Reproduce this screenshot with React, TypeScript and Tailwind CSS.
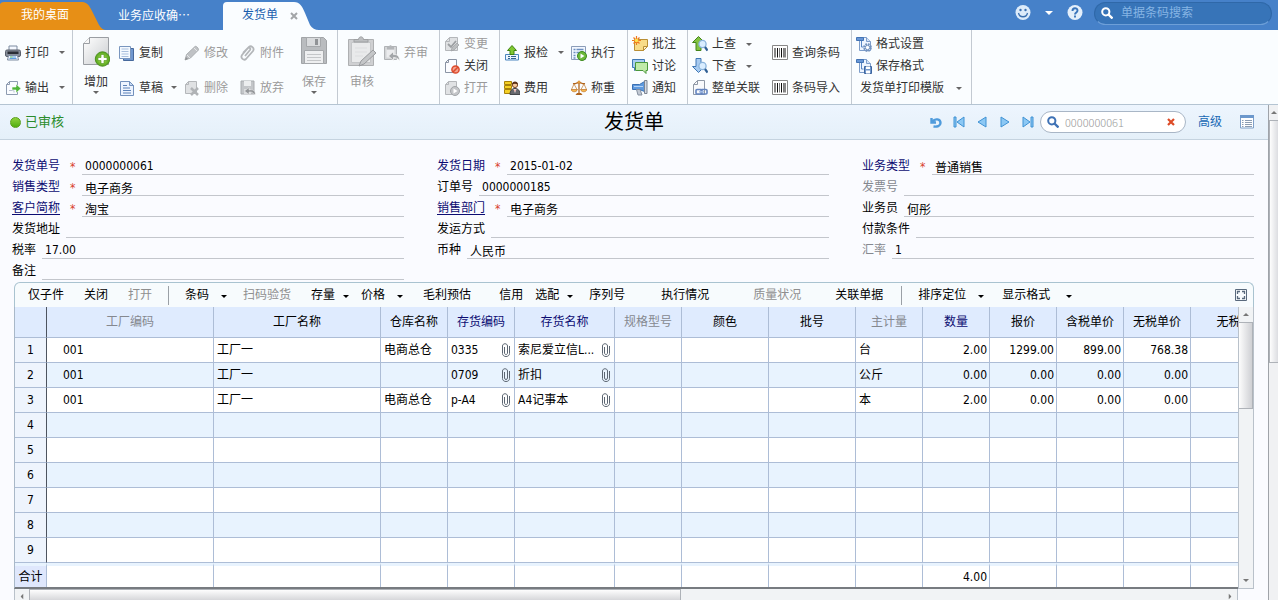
import type { ReactNode } from 'react'

type IconProps = { className?: string }

function Svg({ className = 'w-4 h-4', box = '0 0 16 16', children }: { className?: string; box?: string; children: ReactNode }) {
  return (
    <svg viewBox={box} className={`shrink-0 ${className}`} fill="none" aria-hidden="true">
      {children}
    </svg>
  )
}

function Caret({ className = 'text-[#555]' }: IconProps) {
  return (
    <Svg box="0 0 6 3" className={`w-[6px] h-[3px] ${className}`}>
      <path d="M0 0h6L3 3z" fill="currentColor" />
    </Svg>
  )
}

const PrintIcon = () => (
  <Svg>
    <path d="M4 1h8v5H4z" fill="#f4f8ff" stroke="#7d8ba0" />
    <rect x="0.5" y="5" width="15" height="6.5" rx="1.5" fill="#858c98" stroke="#5a606c" />
    <path d="M2.500 6.500h11v2.500h-11z" fill="#2a2e36" />
    <path d="M3.500 10.500h9l1 4.500h-11z" fill="#eef4ff" stroke="#7d8ba0" />
    <path d="M5 12h6M4.500 13.500h7" stroke="#5f9fe0" />
    <path d="M5 12h2.500" stroke="#8ce070" />
  </Svg>
)

const ExportIcon = () => (
  <Svg>
    <path d="M4.500 1.500h8v13h-11v-10z" fill="#fafcff" stroke="#8d9bb0" />
    <path d="M4.500 1.500v3h-3" stroke="#8d9bb0" />
    <path d="M4 10.500h5v2" stroke="#b8c2d0" />
    <path d="M7 7h4V4l5 4.500-5 4.500v-3H7z" fill="#4fb53a" stroke="#fff" strokeWidth="0.6" />
  </Svg>
)

const AddIcon = () => (
  <Svg box="0 0 28 32" className="w-7 h-8">
    <defs>
      <linearGradient id="page" x1="0" y1="0" x2="1" y2="1">
        <stop stopColor="#ffffff" />
        <stop offset="1" stopColor="#c9cccf" />
      </linearGradient>
      <radialGradient id="plus">
        <stop stopColor="#b5e35a" />
        <stop offset="1" stopColor="#55a61c" />
      </radialGradient>
    </defs>
    <path d="M7.500 2.500h19v27h-25v-21z" fill="url(#page)" stroke="#9a9ea3" />
    <path d="M7.500 2.500v6h-6" fill="#f7f7f7" stroke="#9a9ea3" />
    <circle cx="20.500" cy="24" r="7.200" fill="url(#plus)" stroke="#4d8f20" />
    <path d="M19 19.500h3v3h3v3h-3v3h-3v-3h-3v-3h3z" fill="#fff" stroke="#4b9418" strokeWidth="0.6" />
  </Svg>
)

const CopyIcon = () => (
  <Svg>
    <path d="M4.500 3.500h10v12h-10z" fill="#6f97cf" stroke="#47699c" />
    <path d="M0.500 1.500h11v12h-11z" fill="#f5faff" stroke="#7996bf" />
    <path d="M2.500 4h7M2.500 6.500h7M2.500 9h7M2.500 11.500h7" stroke="#a9bfdd" />
  </Svg>
)

const DraftIcon = () => (
  <Svg>
    <path d="M1.500 1.500h9l4 4v10h-13z" fill="#edf4ff" stroke="#7391bd" />
    <path d="M10.500 1.500v4h4z" fill="#c7dbf5" stroke="#7391bd" />
    <path d="M4 5.500h4M4 8h7M4 10.500h8M4 13h8" stroke="#5c82b8" />
  </Svg>
)

const PencilIcon = () => (
  <Svg>
    <path d="M1 15l1.500-5.500L11 1.500c1-1 4 2 3.500 3.500L6.500 13z" fill="#bfc2c5" stroke="#a0a3a6" strokeWidth="0.800" />
    <path d="M3 10l3 3M10 3l3 3" stroke="#e6e8ea" />
    <path d="M1 15l1-3 2 2z" fill="#909396" />
  </Svg>
)

const DeleteIcon = () => (
  <Svg>
    <path d="M4.500 1.500h8v12h-11v-9z" fill="#dfe1e3" stroke="#b4b7ba" />
    <path d="M4.500 1.500v3h-3" stroke="#b4b7ba" />
    <path d="M7 8l7 7M14 8l-7 7" stroke="#b0b3b6" strokeWidth="2.500" />
  </Svg>
)

const AttachIcon = () => (
  <Svg>
    <path d="M3 8l6-6c2-2 6 1 4 4l-7 8c-2 2-6-1-4-4l6-7c1.500-1 3 .5 2 2l-5 6" stroke="#b3b6b9" strokeWidth="1.800" />
  </Svg>
)

const DiscardIcon = () => (
  <Svg>
    <path d="M1 1h13v13H1z" fill="#c3c6c9" stroke="#a9acaf" />
    <path d="M4 1h7v5H4z" fill="#eceeef" />
    <path d="M4 9h7v5H4z" fill="#dcdee0" />
    <path d="M15 15c1-4-2-6-6-5V7.500L4.500 11 9 14.500V12c3-.5 4 1 6 3z" fill="#939699" stroke="#eee" strokeWidth="0.500" />
  </Svg>
)

const SaveIcon = () => (
  <Svg box="0 0 28 32" className="w-7 h-8">
    <path d="M1.500 2.500h22l3 3v23h-25z" fill="#b9bcbf" stroke="#a1a4a7" />
    <path d="M6.500 2.500h14v9h-14z" fill="#d9dbdd" stroke="#a5a8ab" />
    <path d="M15 4h3v6h-3z" fill="#909396" />
    <path d="M4.500 15.500h19v13h-19z" fill="#eeeff0" stroke="#a5a8ab" />
    <path d="M7 19.500h14M7 22.500h14M7 25.500h14" stroke="#c4c6c8" />
  </Svg>
)

const AuditIcon = () => (
  <Svg box="0 0 30 32" className="w-[30px] h-8">
    <path d="M1.500 4.500h25v26h-25z" fill="#cfd0d2" stroke="#aeb0b2" />
    <path d="M4.500 7.500h19v20h-19z" fill="#e9eaeb" stroke="#c4c6c8" />
    <path d="M7 7V4.500h4.500c0-3.500 5-3.500 5 0H21V7z" fill="#bcbec0" stroke="#9fa1a3" />
    <path d="M8 13h12M8 17h12M8 21h8" stroke="#dcdddf" />
    <path d="M12 31l2-5 12-11 3 3-12 11z" fill="#c4c6c8" stroke="#999b9e" />
  </Svg>
)

const UnauditIcon = () => (
  <Svg>
    <path d="M0.500 1.500h12v13h-12z" fill="#d3d5d7" stroke="#b0b3b6" />
    <path d="M2.500 4.500h8v8h-8z" fill="#ebecee" />
    <path d="M3 4.500V2h2c0-2.500 3-2.500 3 0h2v2.500z" fill="#b3b6b9" />
    <path d="M15.500 15.500c0-4-2-6.500-6-6V6.500L4.500 11l5 4.500v-3c3 0 4 1 6 3z" fill="#a3a6a9" stroke="#f6f6f6" strokeWidth="0.700" />
  </Svg>
)

const ChangeIcon = () => (
  <Svg>
    <path d="M5.500 1.500h8v13h-12v-9z" fill="#dfe1e3" stroke="#b4b7ba" />
    <path d="M5.500 1.500v4h-4" stroke="#b4b7ba" />
    <path d="M4 8l3 3 5-6" stroke="#9c9fa2" strokeWidth="1.800" />
    <path d="M7 15l1-3 5-5 2 2-5 5z" fill="#bbbec0" stroke="#9c9fa2" strokeWidth="0.700" />
  </Svg>
)

const CloseDocIcon = () => (
  <Svg>
    <path d="M4.500 1.500h8v13h-11v-10z" fill="#fbfcff" stroke="#8a94a4" />
    <path d="M4.500 1.500v3h-3" stroke="#8a94a4" />
    <circle cx="11.500" cy="11.500" r="3.600" fill="#f4a08c" stroke="#dc4a2c" strokeWidth="1.500" />
    <path d="M9 14l5-5" stroke="#dc4a2c" strokeWidth="1.600" />
  </Svg>
)

const OpenDocIcon = () => (
  <Svg>
    <path d="M4.500 1.500h8v13h-11v-10z" fill="#e0e2e4" stroke="#b4b7ba" />
    <path d="M4.500 1.500v3h-3" stroke="#b4b7ba" />
    <circle cx="11" cy="11" r="4.500" fill="#c4c6c9" stroke="#a2a5a8" />
    <path d="M9.500 8.500l4 2.500-4 2.500z" fill="#fff" />
  </Svg>
)

const InspectIcon = () => (
  <Svg>
    <path d="M1.500 9.500h13v5.500h-13z" fill="#eef6ff" stroke="#4a86bf" />
    <path d="M4 11.500h2M7 11.500h5M4 13.500h2M7 13.500h5" stroke="#32638f" />
    <path d="M8 0.500l4.500 5H10v4H6v-4H3.500z" fill="#7fc832" stroke="#3f8210" />
  </Svg>
)

const RunIcon = () => (
  <Svg>
    <path d="M0.500 1.500h14v13h-14z" fill="#f2f7ff" stroke="#8b9db8" />
    <path d="M2.500 4.500h2M5.500 4.500h7M2.500 7.500h2M5.500 7.500h5M2.500 10.500h2M2.500 13h2" stroke="#6c8fc0" strokeWidth="1.300" />
    <circle cx="11" cy="11" r="4.500" fill="#6cb83a" stroke="#3d8a1e" />
    <path d="M9.500 8.500l4 2.500-4 2.500z" fill="#fff" />
  </Svg>
)

const CostIcon = () => (
  <Svg>
    <path d="M0.500 1.500h7v3h-7zM0.500 5.500h7v3h-7zM0.500 9.500h7v4h-7z" fill="#f4d026" stroke="#a88108" />
    <path d="M6 14.500c0-4 2-6 5-6s5 2 5 6z" fill="#65686e" stroke="#43464b" />
    <circle cx="11" cy="5" r="2.600" fill="#f5c89c" stroke="#7b4a2a" />
    <path d="M8 4.500c0-4 6-4 6 0-2-1-4-1-6 0z" fill="#5a3018" />
    <path d="M9.500 9h3l-1.500 4z" fill="#fff" />
    <path d="M10.500 9.500h1l-.5 3z" fill="#d43c2c" />
  </Svg>
)

const ScaleIcon = () => (
  <Svg>
    <path d="M8 1v13M2 3.500c3 1 3-1 6-1s3 2 6 1" stroke="#b0641c" strokeWidth="1.300" />
    <circle cx="8" cy="2" r="1.500" fill="#e49a3c" />
    <path d="M3 4L0.500 9.500M3 4l3 5.500M13 4l-3 5.500M13 4l2.500 5.500" stroke="#c58540" strokeWidth="0.800" />
    <path d="M0 9.500h6.500c-1 3-5.500 3-6.500 0zM9.500 9.500H16c-1 3-5.500 3-6.500 0z" fill="#f5b850" stroke="#c07020" strokeWidth="0.700" />
    <path d="M4.500 15h7l-1.500-2H6z" fill="#b0641c" />
  </Svg>
)

const NoteIcon = () => (
  <Svg>
    <path d="M2.500 3.500h13v7l-4 4h-9z" fill="#f8dc88" stroke="#b98f35" />
    <path d="M15.500 10.500h-4v4z" fill="#fff2c4" stroke="#b98f35" />
    <path d="M4.500 0v9M0 4.500h9M1.500 1.500l6 6M7.500 1.500l-6 6" stroke="#ee7a1e" strokeWidth="1.200" />
    <circle cx="4.500" cy="4.500" r="1.800" fill="#ffe14d" />
  </Svg>
)

const DiscussIcon = () => (
  <Svg>
    <path d="M0.500 1.500h12v8h-7l-3 3v-3h-2z" fill="#a9cdf2" stroke="#3f78b5" />
    <path d="M3.500 4.500h12v8h-1.500v3l-3-3H3.500z" fill="#c0eaa9" stroke="#4a973c" />
  </Svg>
)

const NoticeIcon = () => (
  <Svg>
    <path d="M0.500 4.500h7l5-3v10l-5-2h-7z" fill="#5f9ade" stroke="#3a70b3" />
    <path d="M4.500 9.500h3.500l2 5.500H6z" fill="#c3cad4" stroke="#8590a0" />
    <path d="M12.500 0.500h2.500v13h-2.500z" fill="#d3dae4" stroke="#7c8592" />
    <path d="M2 6.500h9" stroke="#b4d4f7" />
  </Svg>
)

function LookupIcon({ up }: { up?: boolean }) {
  return (
    <Svg>
      {up ? (
        <path d="M6.500 0.500l6 6H9v8H4v-8H0.500z" fill="#82c341" stroke="#44851a" />
      ) : (
        <path d="M4 0.500h5v8h3.500l-6 6-6-6H4z" fill="#a8cbf0" stroke="#3f77b5" />
      )}
      <circle cx="10.500" cy="8" r="3.600" fill="#d9edff" stroke="#8bb4dc" strokeWidth="1.300" />
      <path d="M13 11l2.500 3.500" stroke="#2f5f94" strokeWidth="2.200" />
    </Svg>
  )
}

const LinkDocIcon = () => (
  <Svg>
    <path d="M5.500 0.500h7v14h-11v-10z" fill="#f8fafc" stroke="#8f99a6" />
    <path d="M5.500 0.500v4h-4" stroke="#8f99a6" />
    <rect x="4" y="9.500" width="6" height="4.500" rx="1" stroke="#6485c0" strokeWidth="1.600" />
    <rect x="9" y="9.500" width="6" height="4.500" rx="1" stroke="#6485c0" strokeWidth="1.600" />
    <path d="M7 11.800h5" stroke="#a5bde4" strokeWidth="1.500" />
  </Svg>
)

const BarcodeIcon = () => (
  <Svg>
    <path d="M0.500 0.500h15v14H0.500z" fill="#fff" stroke="#888" />
    <path d="M3 3v9.500M5.500 3v9.500M9.500 3v9.500M13 3v9.500" stroke="#111" />
    <path d="M7.500 3v9.500M11.500 3v9.500" stroke="#444" strokeWidth="0.700" />
  </Svg>
)

function FormatIcon({ save }: { save?: boolean }) {
  return (
    <Svg>
      <path d="M3.500 1.500h7l4 4v9h-11z" fill="#eef5ff" stroke="#7d9dca" />
      <path d="M10.500 1.500v4h4" fill="#d3e3f8" stroke="#7d9dca" />
      <path d="M0.500 1.500h7v3h-7z" fill="#6796d6" stroke="#4474b4" />
      <path d="M5.500 5v6h2" stroke="#5a87c4" />
      {save ? (
        <>
          <path d="M8.500 8.500h7v7h-7z" fill="#6f96cc" stroke="#3d659e" />
          <path d="M10 8.500h4v2.500h-4zM10 12.500h4v3h-4z" fill="#fff" />
        </>
      ) : (
        <>
          <circle cx="11.500" cy="11.500" r="3.500" stroke="#7493be" strokeWidth="1.800" strokeDasharray="1.800 0.950" />
          <circle cx="11.500" cy="11.500" r="2.200" fill="#fff" stroke="#6a8cbc" />
        </>
      )}
    </Svg>
  )
}

const ClipIcon = () => (
  <Svg box="0 0 8 14" className="w-2 h-[14px]">
    <path d="M2.500 4v6c0 2 3 2 3 0V3c0-3-5-3-5 0v7.500c0 4 7 4 7 0V3" stroke="#5c6672" />
  </Svg>
)

const SearchIcon = ({ className = '' }: IconProps) => (
  <Svg box="0 0 12 12" className={`w-3 h-3 ${className}`}>
    <circle cx="4.800" cy="4.800" r="3.600" stroke="currentColor" strokeWidth="2" />
    <path d="M7.500 7.500l4 4" stroke="currentColor" strokeWidth="2.400" />
  </Svg>
)

type ToolProps = { icon?: ReactNode; label: string; off?: boolean; caret?: string; tall?: boolean; edge?: string }

function Tool({ icon, label, off, caret, tall, edge = '' }: ToolProps) {
  return (
    <button disabled={off} className={`flex items-center gap-1 whitespace-nowrap ${tall ? 'h-[35px]' : 'h-[22px]'} ${off ? 'text-[#9a9a9a]' : 'text-[#333]'} ${edge}`}>
      {icon}
      <span>{label}</span>
      {caret && <Caret className={`text-[#666] ${caret}`} />}
    </button>
  )
}

function BigTool({ icon, label, off, caret }: { icon: ReactNode; label: string; off?: boolean; caret?: boolean }) {
  return (
    <button disabled={off} className={`flex flex-col items-center pt-[5px] ${off ? 'text-[#9a9a9a]' : 'text-[#333]'}`}>
      {icon}
      <span className="mt-1.5 leading-[18px]">{label}</span>
      {caret && <Caret className="text-[#666]" />}
    </button>
  )
}

const Group = ({ className, children }: { className: string; children: ReactNode }) => (
  <div className={`flex shrink-0 items-start border-r border-[#c3cad2] ${className}`}>{children}</div>
)

const Stack = ({ tall, children }: { tall?: boolean; children: ReactNode }) => (
  <div className={`flex flex-col items-start ${tall ? 'pt-[5px]' : 'pt-[3px]'}`}>{children}</div>
)

function TopBar() {
  return (
    <header className="flex h-[30px] shrink-0 items-stretch bg-[#4681c9] text-white">
      <nav className="flex items-stretch">
        <button className="relative w-[106px] pr-4 text-center">
          <svg viewBox="0 0 106 30" className="absolute inset-0 h-full w-full" aria-hidden="true">
            <path d="M0 4q1-2 4-2h78c6 0 8 5 11 11l6 12q3 5 7 5H0z" fill="#e78f16" />
          </svg>
          <span className="relative">我的桌面</span>
        </button>
        <button className="w-[116px] px-3 text-left font-['Noto_Sans_CJK_SC',sans-serif]">业务应收确…</button>
        <div className="relative flex w-[98px] items-center pl-5 text-[#1b5fae]">
          <svg viewBox="0 0 98 30" className="absolute inset-0 h-full w-full" aria-hidden="true">
            <path d="M1 30V6q0-4 4-4h67c6 0 8 4 11 11l5 12q3 5 9 5z" fill="#fafdff" />
          </svg>
          <button className="relative">发货单</button>
          <button aria-label="关闭" className="relative ml-3">
            <Svg box="0 0 8 8" className="mt-0.5 h-2 w-2">
              <path d="M1 1l6 6M7 1L1 7" stroke="#a2a5a8" strokeWidth="2" />
            </Svg>
          </button>
        </div>
      </nav>
      <div className="ml-auto flex items-center pr-1.5 pb-1">
        <button aria-label="用户">
          <Svg>
            <circle cx="8" cy="7.500" r="7.500" fill="#dcebfa" />
            <circle cx="5.500" cy="5" r="1.200" fill="#3a6fb0" />
            <circle cx="10.500" cy="5" r="1.200" fill="#3a6fb0" />
            <path d="M3.500 8c1 5 8 5 9 0" stroke="#3a6fb0" strokeWidth="1.300" />
          </Svg>
        </button>
        <button aria-label="更多" className="ml-3.5">
          <Svg box="0 0 8 4" className="h-1 w-2">
            <path d="M0 0h8L4 4z" fill="#fff" />
          </Svg>
        </button>
        <button aria-label="帮助" className="ml-3.5">
          <Svg>
            <circle cx="8" cy="7.500" r="7.500" fill="#e4effb" />
            <path d="M5.500 6c0-3.500 5-3.500 5-.5 0 2-2.500 1.800-2.500 4M8 10.500v2" stroke="#3a75bb" strokeWidth="1.900" />
          </Svg>
        </button>
        <label className="ml-[11px] flex h-[23px] w-[178px] items-center gap-2 rounded-full border border-[#2f68a8] border-b-[#6d9fd8] bg-[#3774b8] px-1.5">
          <SearchIcon />
          <input aria-label="单据条码搜索" placeholder="单据条码搜索" className="w-full min-w-0 bg-transparent outline-none placeholder:text-[#86b4e4]" />
        </label>
      </div>
    </header>
  )
}

function Ribbon() {
  return (
    <div className="flex h-[75px] shrink-0 items-stretch overflow-hidden border-b border-[#b4c4d2] bg-[#fafdff]">
      <Group className="w-[73px] pl-[5px]">
        <Stack tall>
          <Tool tall icon={<PrintIcon />} label="打印" caret="ml-1.5" />
          <Tool tall icon={<ExportIcon />} label="输出" caret="ml-1.5" />
        </Stack>
      </Group>
      <Group className="w-[265px] pl-[9px]">
        <BigTool icon={<AddIcon />} label="增加" caret />
        <div className="ml-[9px] flex">
          <Stack tall>
            <Tool tall icon={<CopyIcon />} label="复制" />
            <Tool tall icon={<DraftIcon />} label="草稿" caret="ml-1" />
          </Stack>
          <div className="ml-[7px] flex gap-3">
            <Stack tall>
              <Tool tall off icon={<PencilIcon />} label="修改" />
              <Tool tall off icon={<DeleteIcon />} label="删除" />
            </Stack>
            <Stack tall>
              <Tool tall off icon={<AttachIcon />} label="附件" />
              <Tool tall off icon={<DiscardIcon />} label="放弃" />
            </Stack>
          </div>
        </div>
        <div className="ml-4">
          <BigTool off icon={<SaveIcon />} label="保存" caret />
        </div>
      </Group>
      <Group className="w-[102px] pl-[9px]">
        <BigTool off icon={<AuditIcon />} label="审核" />
        <div className="ml-[7px]">
          <Stack tall>
            <Tool tall off icon={<UnauditIcon />} label="弃审" />
          </Stack>
        </div>
      </Group>
      <Group className="w-[60px] pl-1">
        <Stack>
          <Tool off icon={<ChangeIcon />} label="变更" />
          <Tool icon={<CloseDocIcon />} label="关闭" />
          <Tool off icon={<OpenDocIcon />} label="打开" />
        </Stack>
      </Group>
      <Group className="w-[128px] gap-[7px] pl-1">
        <Stack tall>
          <Tool tall icon={<InspectIcon />} label="报检" caret="ml-1.5" />
          <Tool tall icon={<CostIcon />} label="费用" />
        </Stack>
        <Stack tall>
          <Tool tall icon={<RunIcon />} label="执行" />
          <Tool tall icon={<ScaleIcon />} label="称重" />
        </Stack>
      </Group>
      <Group className="w-[60px] pl-1">
        <Stack>
          <Tool icon={<NoteIcon />} label="批注" />
          <Tool icon={<DiscussIcon />} label="讨论" />
          <Tool icon={<NoticeIcon />} label="通知" />
        </Stack>
      </Group>
      <Group className="w-[164px] gap-3 pl-1">
        <Stack>
          <Tool icon={<LookupIcon up />} label="上查" caret="ml-1.5" />
          <Tool icon={<LookupIcon />} label="下查" caret="ml-1.5" />
          <Tool icon={<LinkDocIcon />} label="整单关联" />
        </Stack>
        <Stack tall>
          <Tool tall icon={<BarcodeIcon />} label="查询条码" />
          <Tool tall icon={<BarcodeIcon />} label="条码导入" />
        </Stack>
      </Group>
      <Group className="w-[120px] pl-1">
        <Stack>
          <Tool icon={<FormatIcon />} label="格式设置" />
          <Tool icon={<FormatIcon save />} label="保存格式" />
          <Tool label="发货单打印模版" caret="ml-2" edge="pl-1" />
        </Stack>
      </Group>
    </div>
  )
}

const navIcons = [
  { label: '刷新', path: 'M1.500 2v4.500H6M2.500 5.500C5 2 10.500 3 10.500 7c0 3-3.500 4-7 3.500', line: true },
  { label: '首张', path: 'M1 1h2v10H1zM11 1v10L4 6z' },
  { label: '上一张', path: 'M10 1v10L2 6z' },
  { label: '下一张', path: 'M2 1v10l8-5z' },
  { label: '末张', path: 'M1 1v10l7-5zM9 1h2v10H9z' },
]

function TitleBar() {
  return (
    <div className="grid h-[35px] shrink-0 grid-cols-[1fr_auto_1fr] items-center border-b border-[#c5d3df] bg-gradient-to-b from-[#edf5fe] to-[#e5f0f9]">
      <div className="flex items-center gap-1 pl-[10px] text-[13px] text-[#2c8c2c]">
        <span className="h-[11px] w-[11px] rounded-full border border-[#5a9f1c] bg-gradient-to-b from-[#8fd23c] to-[#4fae0c]" />
        已审核
      </div>
      <h1 className="text-[20px] leading-none text-black">发货单</h1>
      <div className="flex items-center justify-end pr-3.5">
        <div className="flex gap-[11px]">
          {navIcons.map((item) => (
            <button key={item.label} aria-label={item.label}>
              <Svg box="0 0 12 12" className="h-3 w-3">
                <path
                  d={item.path}
                  fill={item.line ? 'none' : '#8cc8f4'}
                  stroke={item.line ? '#4f9bdc' : '#3f92d4'}
                  strokeWidth={item.line ? 2.4 : 1}
                />
              </Svg>
            </button>
          ))}
        </div>
        <label className="ml-1.5 flex h-[22px] w-[146px] items-center gap-1.5 rounded-full border border-[#a9b6c6] bg-white px-1.5 text-[#3f72b5]">
          <SearchIcon />
          <input aria-label="单号" defaultValue="0000000061" className="w-full min-w-0 bg-transparent font-['Noto_Sans_CJK_SC',sans-serif] text-[11px] font-light text-[#999] outline-none" />
          <button aria-label="清除" className="mr-1">
            <Svg box="0 0 8 8" className="h-2 w-2">
              <path d="M1 1l6 6M7 1L1 7" stroke="#dd4b27" strokeWidth="2.200" />
            </Svg>
          </button>
        </label>
        <a href="#advanced" className="ml-3 text-[#1768b4]">高级</a>
        <button aria-label="列表" className="ml-[18px]">
          <Svg box="0 0 14 14" className="h-3.5 w-3.5">
            <path d="M0.500 0.500h13v12.500H0.500z" fill="#fff" stroke="#7fa0c8" />
            <path d="M0 0h14v3H0z" fill="#6c98cc" />
            <path d="M2 5.500h1.500M5 5.500h7M2 7.500h1.500M5 7.500h7M2 9.500h1.500M5 9.500h7M2 11.500h1.500M5 11.500h7" stroke="#8c9db2" />
          </Svg>
        </button>
      </div>
    </div>
  )
}

type FieldData = { id: string; label: string; value?: string; required?: boolean; color?: string }

const navy = 'text-[#0c0c72]'
const linked = 'text-[#0c0c72] underline underline-offset-2'
const muted = 'text-[#85888f]'

const fields: FieldData[] = [
  { id: 'no', label: '发货单号', value: '0000000061', required: true, color: navy },
  { id: 'date', label: '发货日期', value: '2015-01-02', required: true, color: navy },
  { id: 'biz', label: '业务类型', value: '普通销售', required: true, color: navy },
  { id: 'sale', label: '销售类型', value: '电子商务', required: true, color: navy },
  { id: 'order', label: '订单号', value: '0000000185' },
  { id: 'invoice', label: '发票号', color: muted },
  { id: 'customer', label: '客户简称', value: '淘宝', required: true, color: linked },
  { id: 'dept', label: '销售部门', value: '电子商务', required: true, color: linked },
  { id: 'clerk', label: '业务员', value: '何彤' },
  { id: 'address', label: '发货地址' },
  { id: 'ship', label: '发运方式' },
  { id: 'pay', label: '付款条件' },
  { id: 'tax', label: '税率', value: '17.00' },
  { id: 'currency', label: '币种', value: '人民币' },
  { id: 'rate', label: '汇率', value: '1', color: muted },
  { id: 'memo', label: '备注' },
]

function Field({ field }: { field: FieldData }) {
  return (
    <div className="flex items-end">
      <label htmlFor={field.id} className={`shrink-0 leading-[17px] ${field.color ?? 'text-black'}`}>{field.label}</label>
      {field.required && <span className="ml-2.5 w-1.5 leading-[16px] text-[#d8402c]">*</span>}
      <input
        id={field.id}
        defaultValue={field.value}
        className="ml-1.5 h-[17px] min-w-0 flex-1 border-b border-[#c3c6cc] bg-transparent pl-[3px] leading-[16px] text-black outline-none"
      />
    </div>
  )
}

const gridTools = [
  { label: '仅子件', gap: 'ml-[13px]' },
  { label: '关闭', gap: 'ml-5' },
  { label: '打开', gap: 'ml-5', off: true },
  { label: '条码', gap: 'ml-4', rule: 'ml-4', caret: 'ml-3' },
  { label: '扫码验货', gap: 'ml-4', off: true },
  { label: '存量', gap: 'ml-5', caret: 'ml-2' },
  { label: '价格', gap: 'ml-3', caret: 'ml-3' },
  { label: '毛利预估', gap: 'ml-5' },
  { label: '信用', gap: 'ml-7' },
  { label: '选配', gap: 'ml-3', caret: 'ml-2' },
  { label: '序列号', gap: 'ml-4' },
  { label: '执行情况', gap: 'ml-9' },
  { label: '质量状况', gap: 'ml-11', off: true },
  { label: '关联单据', gap: 'ml-[34px]' },
  { label: '排序定位', gap: 'ml-4', rule: 'ml-[18px]', caret: 'ml-3' },
  { label: '显示格式', gap: 'ml-[18px]', caret: 'ml-4' },
]

const columns = [
  { title: '工厂编码', width: 'w-[167px]', color: muted, cell: 'pl-4' },
  { title: '工厂名称', width: 'w-[167px]', color: 'text-black', cell: 'pl-[3px]' },
  { title: '仓库名称', width: 'w-[67px]', color: 'text-black', cell: 'pl-[3px]' },
  { title: '存货编码', width: 'w-[67px]', color: navy, cell: 'pl-[3px]', clip: true },
  { title: '存货名称', width: 'w-[100px]', color: navy, cell: 'pl-[3px]', clip: true },
  { title: '规格型号', width: 'w-[67px]', color: muted, cell: '' },
  { title: '颜色', width: 'w-[87px]', color: 'text-black', cell: '' },
  { title: '批号', width: 'w-[87px]', color: 'text-black', cell: '' },
  { title: '主计量', width: 'w-[67px]', color: muted, cell: 'pl-[3px]' },
  { title: '数量', width: 'w-[67px]', color: navy, cell: 'pr-[2px] text-right' },
  { title: '报价', width: 'w-[67px]', color: 'text-black', cell: 'pr-[2px] text-right' },
  { title: '含税单价', width: 'w-[67px]', color: 'text-black', cell: 'pr-[2px] text-right' },
  { title: '无税单价', width: 'w-[67px]', color: 'text-black', cell: 'pr-[2px] text-right' },
  { title: '无税金额', width: 'w-[100px]', color: 'text-black', cell: '' },
]

const rows = [
  ['001', '工厂一', '电商总仓', '0335', '索尼爱立信L...', '', '', '', '台', '2.00', '1299.00', '899.00', '768.38'],
  ['001', '工厂一', '', '0709', '折扣', '', '', '', '公斤', '0.00', '0.00', '0.00', '0.00'],
  ['001', '工厂一', '电商总仓', 'p-A4', 'A4记事本', '', '', '', '本', '2.00', '0.00', '0.00', '0.00'],
  [], [], [], [], [], [],
]

function DataGrid() {
  return (
    <section className="mx-3.5 mt-0.5 flex min-h-0 flex-1 flex-col">
      <div className="flex h-[25px] shrink-0 items-center overflow-hidden rounded-t-md border border-b-0 border-[#a9c3d0] bg-[#f7fbfd] whitespace-nowrap">
        {gridTools.map((tool) => (
          <div key={tool.label} className="flex items-center">
            {tool.rule && <span className={`h-[19px] w-px bg-[#9aa0a6] ${tool.rule}`} />}
            <button disabled={tool.off} className={`flex items-center ${tool.gap} ${tool.off ? 'text-[#8f8f8f]' : 'text-black'}`}>
              {tool.label}
              {tool.caret && <Caret className={`mt-0.5 text-black ${tool.caret}`} />}
            </button>
          </div>
        ))}
        <button aria-label="全屏" className="mr-1.5 ml-auto">
          <Svg box="0 0 12 12" className="h-3 w-3">
            <path d="M0.500 0.500h11v11H0.500z" stroke="#59697c" />
            <path d="M2.500 5V2.500H5M7 2.500h2.500V5M9.500 7v2.500H7M5 9.500H2.500V7" stroke="#59697c" strokeWidth="1.300" />
          </Svg>
        </button>
      </div>

      <div className="flex shrink-0 border-r border-[#b9c1ca]">
        <div className="min-w-0 flex-1 overflow-hidden border-b-2 border-l border-b-[#777b80] border-l-[#a9b8c8]">
          <table className="w-[1276px] table-fixed border-separate border-spacing-0">
            <thead>
              <tr className="h-[31px] bg-[#dfebfe]">
                <th aria-label="行号" className="w-8 border-r border-b border-r-[#4d5460] border-b-[#adbdd6]" />
                {columns.map((col) => (
                  <th key={col.title} className={`border-r border-b border-[#adbdd6] font-normal whitespace-nowrap ${col.width} ${col.color}`}>
                    {col.title}
                  </th>
                ))}
              </tr>
            </thead>
            <tbody>
              {rows.map((row, index) => (
                <tr key={index} className="h-[25px] bg-white even:bg-[#e8f3fe]">
                  <td className="border-r border-b border-r-[#4d5460] border-b-[#adbdd6] bg-[#eef4fd] text-center">{index + 1}</td>
                  {columns.map((col, i) => (
                    <td key={col.title} className={`border-r border-b border-[#adbdd6] whitespace-nowrap ${col.cell}`}>
                      {col.clip && row[i] ? (
                        <div className="flex items-center justify-between pr-1">
                          <span>{row[i]}</span>
                          <ClipIcon />
                        </div>
                      ) : (
                        row[i]
                      )}
                    </td>
                  ))}
                </tr>
              ))}
            </tbody>
            <tfoot>
              <tr className="h-6 bg-white">
                <td className="border-t-3 border-r border-t-[#e8f3fe] border-r-[#adbdd6] bg-[#dfe7fc] text-center whitespace-nowrap">合计</td>
                {columns.map((col) => (
                  <td key={col.title} className={`border-t-3 border-r border-t-[#e8f3fe] border-r-[#adbdd6] ${col.cell}`}>
                    {col.title === '数量' ? '4.00' : ''}
                  </td>
                ))}
              </tr>
            </tfoot>
          </table>
        </div>
        <div className="flex w-[15px] flex-col items-center border-b border-l border-[#b9c1ca] bg-[#f1f3f5]">
          <Caret className="my-1.5 rotate-180 text-[#777]" />
          <span className="h-[87px] w-full border border-l-0 border-[#aeb2b8] bg-gradient-to-r from-[#fdfdfd] to-[#cfd0d4]" />
          <Caret className="mt-auto mb-1.5 text-[#777]" />
        </div>
      </div>

      <div className="mr-4 flex h-[14px] shrink-0 items-center border-x border-[#b9c1ca] bg-[#f1f3f5]">
        <Caret className="mx-1 rotate-90 text-[#777]" />
        <span className="h-full w-8/15 border border-[#aeb2b8] bg-gradient-to-b from-[#fdfdfd] to-[#cfd0d4]" />
        <Caret className="mr-1 ml-auto -rotate-90 text-[#777]" />
      </div>
    </section>
  )
}

export default function App() {
  return (
    <div lang="zh-CN" className="flex h-screen flex-col overflow-hidden bg-[#fafbff] font-['DejaVu_Sans_Condensed','Noto_Sans_CJK_SC','Noto_Sans',sans-serif] text-[12px] leading-[18px] text-black">
      <TopBar />
      <Ribbon />
      <div className="flex min-h-0 flex-1">
        <main className="flex min-w-0 flex-1 flex-col overflow-hidden">
          <TitleBar />
          <form className="mr-3.5 ml-3 grid shrink-0 auto-rows-[21px] grid-cols-3 gap-x-[33px] pt-3.5">
            {fields.map((field) => (
              <Field key={field.id} field={field} />
            ))}
          </form>
          <DataGrid />
        </main>
        <div className="flex w-[10px] shrink-0 flex-col items-center border-l border-[#9fa3a9] bg-[#f0f1f3]">
          <Caret className="my-1.5 rotate-180 text-[#777]" />
          <span className="h-[49%] w-full border border-r-0 border-[#aeb2b8] bg-gradient-to-r from-[#fdfdfd] to-[#dcdde1]" />
        </div>
      </div>
    </div>
  )
}
